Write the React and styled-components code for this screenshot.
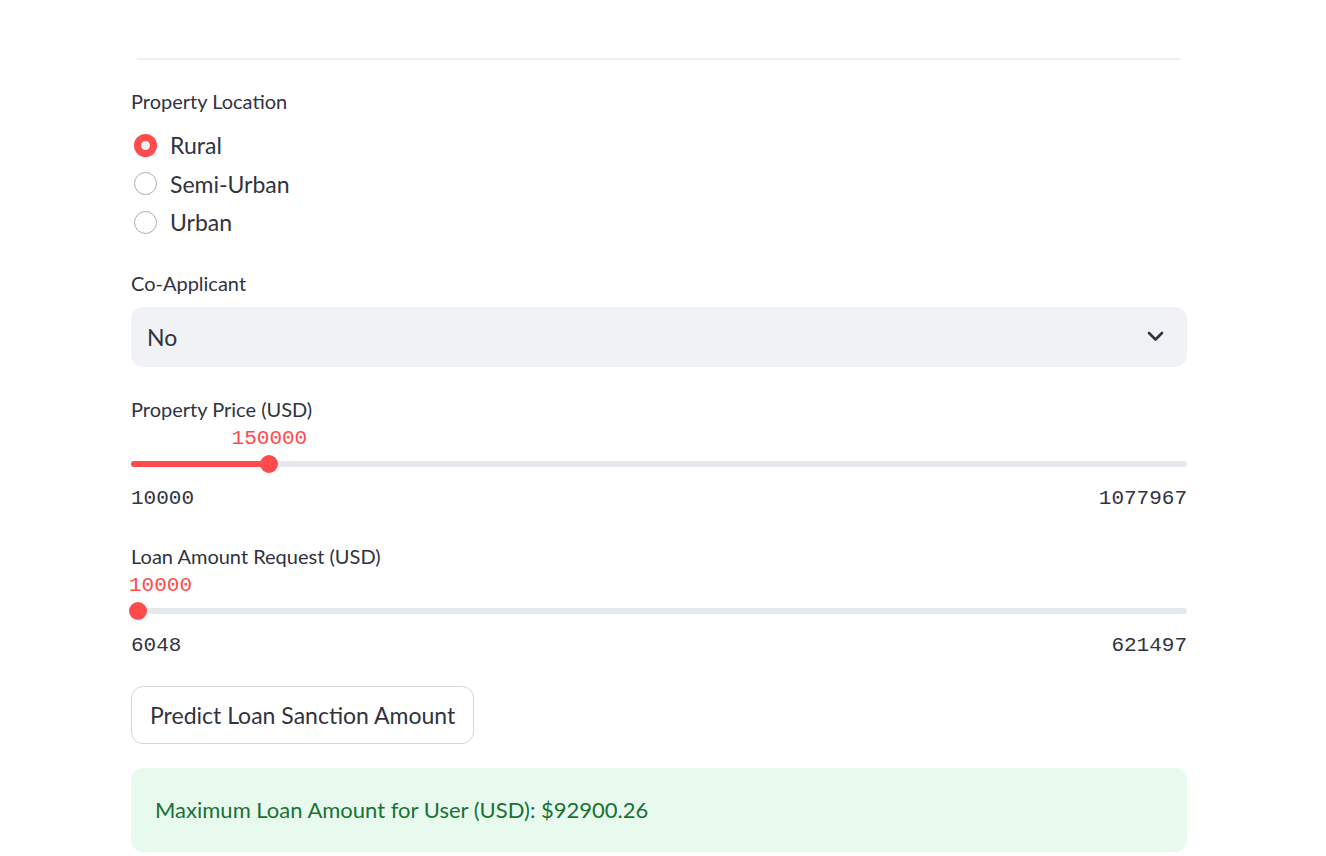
import React from "react";
import styled, { createGlobalStyle } from "styled-components";

const GlobalStyle = createGlobalStyle`
  html, body {
    margin: 0;
    padding: 0;
    background: #ffffff;
  }
  body {
    font-family: Lato, "Noto Sans", sans-serif;
    color: #31333f;
  }
`;

const Page = styled.main`
  width: 1056px;
  padding: 58px 0 0 131px;
`;

const Divider = styled.hr`
  height: 2px;
  margin: 0 6px 26px;
  border: none;
  background: #f0f0f3;
`;

const Label = styled.div`
  font-size: 20px;
  line-height: 30px;
  height: 30px;
  margin-top: ${(p) => p.$gap || 0}px;
`;

const RadioGroup = styled.div`
  display: flex;
  flex-direction: column;
  margin-top: 10px;
`;

const RadioRow = styled.label`
  display: flex;
  align-items: center;
  gap: 13px;
  height: 38.5px;
  font-size: 23px;
`;

const RadioDot = styled.span`
  box-sizing: border-box;
  width: 23px;
  height: 23px;
  margin-left: 3px;
  border-radius: 50%;
  display: flex;
  align-items: center;
  justify-content: center;
  background: ${(p) => (p.$checked ? "#ff4b4b" : "#ffffff")};
  border: ${(p) => (p.$checked ? "none" : "1.5px solid #acadb3")};

  &::after {
    content: "";
    display: ${(p) => (p.$checked ? "block" : "none")};
    width: 9px;
    height: 9px;
    border-radius: 50%;
    background: #f0f2f6;
  }
`;

const Select = styled.div`
  margin-top: 9px;
  height: 60px;
  box-sizing: border-box;
  padding: 0 23px 0 16px;
  display: flex;
  align-items: center;
  justify-content: space-between;
  background: #f0f2f6;
  border-radius: 12px;
  font-size: 23px;
`;

const SliderBox = styled.div`
  margin-top: 2px;
`;

const ValueRow = styled.div`
  position: relative;
  height: 26px;
`;

const ThumbValue = styled.span`
  position: absolute;
  top: 0;
  line-height: 26px;
  font-family: "Liberation Mono", "DejaVu Sans Mono", monospace;
  font-size: 21px;
  color: #ff4b4b;
  white-space: nowrap;
  transform: ${(p) => (p.$clamped ? "translateX(-2px)" : "translateX(-50%)")};
`;

const TrackRow = styled.div`
  position: relative;
  height: 24px;
  display: flex;
  align-items: center;
`;

const Track = styled.div`
  position: relative;
  width: 100%;
  height: 6px;
  border-radius: 3px;
  background: #e5e8ef;
`;

const Fill = styled.div`
  height: 100%;
  border-radius: 3px;
  background: #ff4b4b;
`;

const Thumb = styled.span`
  position: absolute;
  top: 50%;
  width: 18px;
  height: 18px;
  border-radius: 50%;
  background: #ff4b4b;
  transform: translate(-50%, -50%);
`;

const MinMax = styled.div`
  margin-top: 10px;
  display: flex;
  justify-content: space-between;
  line-height: 26px;
  font-family: "Liberation Mono", "DejaVu Sans Mono", monospace;
  font-size: 21px;
  color: #31333f;
`;

const Button = styled.button`
  margin-top: 27px;
  height: 58px;
  padding: 0 18px;
  background: #ffffff;
  border: 1px solid #d5d6d9;
  border-radius: 12px;
  font-family: inherit;
  font-size: 23px;
  color: #31333f;
`;

const Success = styled.div`
  margin-top: 24px;
  height: 84px;
  box-sizing: border-box;
  padding: 0 24px;
  display: flex;
  align-items: center;
  background: #e8f9ee;
  border-radius: 12px;
  color: #177233;
  font-size: 22px;
`;

function Chevron() {
  return (
    <svg width="17" height="11" viewBox="0 0 17 11" fill="none">
      <polyline
        points="2,2 8.5,8.5 15,2"
        stroke="#31333f"
        strokeWidth="2.6"
        strokeLinecap="round"
        strokeLinejoin="round"
      />
    </svg>
  );
}

function Slider({ min, max, value }) {
  const pct = ((value - min) / (max - min)) * 100;
  const clamped = pct < 3;
  return (
    <SliderBox>
      <ValueRow>
        <ThumbValue $clamped={clamped} style={{ left: clamped ? 0 : `${pct}%` }}>
          {value}
        </ThumbValue>
      </ValueRow>
      <TrackRow>
        <Track>
          <Fill style={{ width: `${pct}%` }} />
          <Thumb style={{ left: `${pct}%` }} />
        </Track>
      </TrackRow>
      <MinMax>
        <span>{min}</span>
        <span>{max}</span>
      </MinMax>
    </SliderBox>
  );
}

const locations = ["Rural", "Semi-Urban", "Urban"];

export default function App() {
  return (
    <>
      <GlobalStyle />
      <Page>
        <Divider />
        <Label>Property Location</Label>
        <RadioGroup>
          {locations.map((loc, idx) => (
            <RadioRow key={loc}>
              <RadioDot $checked={idx === 0} />
              {loc}
            </RadioRow>
          ))}
        </RadioGroup>

        <Label $gap={26}>Co-Applicant</Label>
        <Select>
          <span>No</span>
          <Chevron />
        </Select>

        <Label $gap={27}>Property Price (USD)</Label>
        <Slider min={10000} max={1077967} value={150000} />

        <Label $gap={29}>Loan Amount Request (USD)</Label>
        <Slider min={6048} max={621497} value={10000} />

        <Button>Predict Loan Sanction Amount</Button>

        <Success>Maximum Loan Amount for User (USD): $92900.26</Success>
      </Page>
    </>
  );
}
